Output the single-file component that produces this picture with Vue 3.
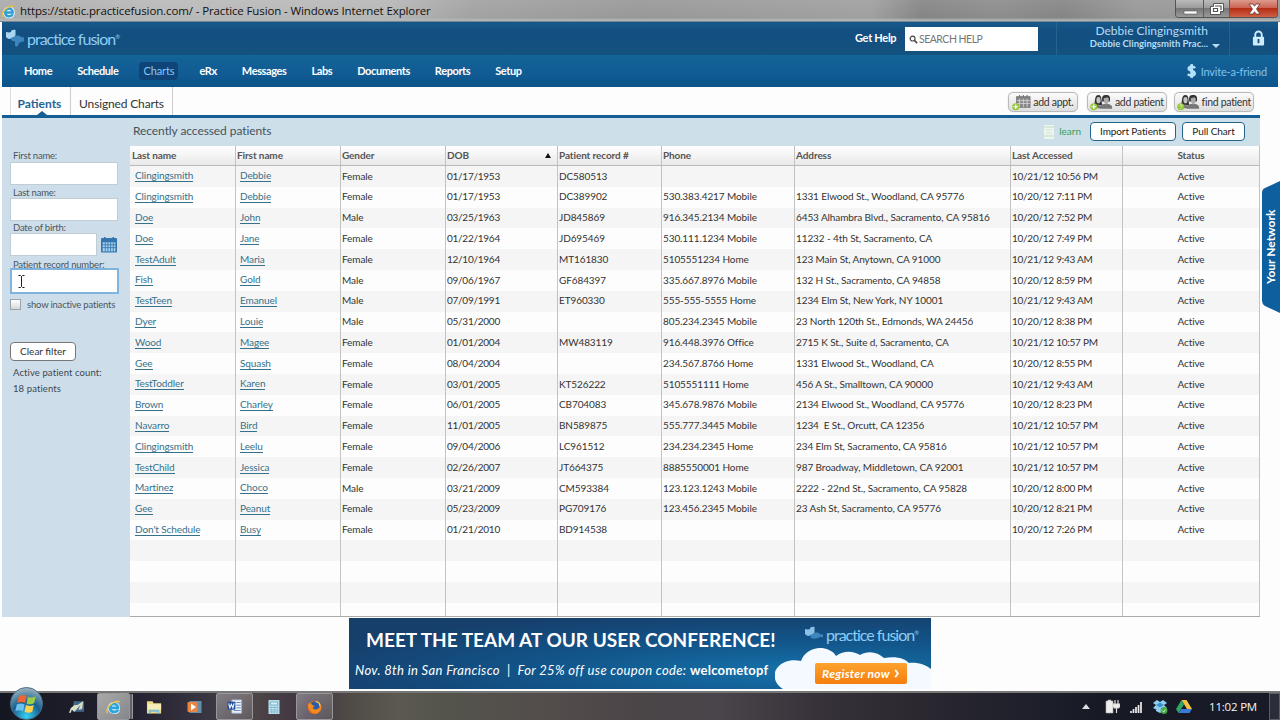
<script setup>
import { ref } from 'vue';

const navItems = ['Home', 'Schedule', 'Charts', 'eRx', 'Messages', 'Labs', 'Documents', 'Reports', 'Setup'];
const activeNav = ref('Charts');

const columns = ['Last name', 'First name', 'Gender', 'DOB', 'Patient record #', 'Phone', 'Address', 'Last Accessed', 'Status'];

const patients = [
  ['Clingingsmith', 'Debbie', 'Female', '01/17/1953', 'DC580513', '', '', '10/21/12 10:56 PM'],
  ['Clingingsmith', 'Debbie', 'Female', '01/17/1953', 'DC389902', '530.383.4217 Mobile', '1331 Elwood St., Woodland, CA 95776', '10/20/12 7:11 PM'],
  ['Doe', 'John', 'Male', '03/25/1963', 'JD845869', '916.345.2134 Mobile', '6453 Alhambra Blvd., Sacramento, CA 95816', '10/20/12 7:52 PM'],
  ['Doe', 'Jane', 'Female', '01/22/1964', 'JD695469', '530.111.1234 Mobile', '11232 - 4th St, Sacramento, CA', '10/20/12 7:49 PM'],
  ['TestAdult', 'Maria', 'Female', '12/10/1964', 'MT161830', '5105551234 Home', '123 Main St, Anytown, CA 91000', '10/21/12 9:43 AM'],
  ['Fish', 'Gold', 'Male', '09/06/1967', 'GF684397', '335.667.8976 Mobile', '132 H St., Sacramento, CA 94858', '10/20/12 8:59 PM'],
  ['TestTeen', 'Emanuel', 'Male', '07/09/1991', 'ET960330', '555-555-5555 Home', '1234 Elm St, New York, NY 10001', '10/21/12 9:43 AM'],
  ['Dyer', 'Louie', 'Male', '05/31/2000', '', '805.234.2345 Mobile', '23 North 120th St., Edmonds, WA 24456', '10/20/12 8:38 PM'],
  ['Wood', 'Magee', 'Female', '01/01/2004', 'MW483119', '916.448.3976 Office', '2715 K St., Suite d, Sacramento, CA', '10/21/12 10:57 PM'],
  ['Gee', 'Squash', 'Female', '08/04/2004', '', '234.567.8766 Home', '1331 Elwood St., Woodland, CA', '10/20/12 8:55 PM'],
  ['TestToddler', 'Karen', 'Female', '03/01/2005', 'KT526222', '5105551111 Home', '456 A St., Smalltown, CA 90000', '10/21/12 9:43 AM'],
  ['Brown', 'Charley', 'Female', '06/01/2005', 'CB704083', '345.678.9876 Mobile', '2134 Elwood St., Woodland, CA 95776', '10/20/12 8:23 PM'],
  ['Navarro', 'Bird', 'Female', '11/01/2005', 'BN589875', '555.777.3445 Mobile', '1234  E St., Orcutt, CA 12356', '10/21/12 10:57 PM'],
  ['Clingingsmith', 'Leelu', 'Female', '09/04/2006', 'LC961512', '234.234.2345 Home', '234 Elm St, Sacramento, CA 95816', '10/21/12 10:57 PM'],
  ['TestChild', 'Jessica', 'Female', '02/26/2007', 'JT664375', '8885550001 Home', '987 Broadway, Middletown, CA 92001', '10/21/12 10:57 PM'],
  ['Martinez', 'Choco', 'Male', '03/21/2009', 'CM593384', '123.123.1243 Mobile', '2222 - 22nd St., Sacramento, CA 95828', '10/20/12 8:00 PM'],
  ['Gee', 'Peanut', 'Female', '05/23/2009', 'PG709176', '123.456.2345 Mobile', '23 Ash St, Sacramento, CA 95776', '10/20/12 8:21 PM'],
  ["Don't Schedule", 'Busy', 'Female', '01/21/2010', 'BD914538', '', '', '10/20/12 7:26 PM']
];

// empty rows fill the rest of the grid
const blankRows = 4;

const firstName = ref('');
const lastName = ref('');
const birthDate = ref('');
const recordNumber = ref('');
const showInactive = ref(false);
</script>

<template>
  <div class="screen">
    <!-- Window title bar -->
    <div class="titlebar">
      <svg class="ie" viewBox="0 0 16 16">
        <path d="M4.500 9h8c0-5.500-8-5.500-8 0 0 5 6.500 5 8 2" fill="none" stroke="#e5f5fb" stroke-width="4.500" />
        <path d="M4.500 9h8c0-5.500-8-5.500-8 0 0 5 6.500 5 8 2" fill="none" stroke="#2f9fd4" stroke-width="2.600" />
        <path d="M1.500 14C-.5 9 8 .5 14.500 2.500" fill="none" stroke="#e4bd45" stroke-width="1.500" />
      </svg>
      <span class="title">https://static.practicefusion.com/ - Practice Fusion - Windows Internet Explorer</span>
      <div class="win-buttons">
        <div class="wb"><svg viewBox="0 0 28 18"><rect x="8" y="11" width="13" height="3" fill="#fff" stroke="#555" stroke-width=".6" /></svg></div>
        <div class="wb"><svg viewBox="0 0 26 18"><path d="M9.500 3.500h10v8h-3v3h-10v-8h3z" fill="#fff" stroke="#555" /><path d="M9.500 8.500h4v3h-4zM11 6h6v4" fill="none" stroke="#555" stroke-width="1.200" /></svg></div>
        <div class="wb close"><svg viewBox="0 0 47 18"><path d="M19 4h4l1.500 2.300L26 4h4l-3.500 5 3.500 5h-4l-1.500-2.300L23 14h-4l3.500-5z" fill="#fff" stroke="#6a3530" stroke-width=".8" /></svg></div>
      </div>
    </div>

    <!-- App header -->
    <header class="header">
      <div class="top">
        <div class="brand">
          <svg class="leaf" viewBox="0 0 20 20">
            <path d="M1 3l3 .5 2-.5c0-2 2-2.500 4.500-2V6l-1 3.500H6c-2 1-4 0-5-1.500z" fill="#a9d5f3" />
            <path d="M6 9c3-1 4-3 8-2.500 1 2 3 1.500 5 2v4c-3 0-3 1-5 1.500-1 5-4 4-4 2v-4c-3 1-4-1-4-3z" fill="#3c86bd" />
          </svg>
          <span>practice fusion<sup>®</sup></span>
        </div>
        <span class="help">Get Help</span>
        <div class="search">
          <svg viewBox="0 0 10 10"><circle cx="4" cy="4" r="2.700" fill="none" stroke="#444" stroke-width="1.300" /><path d="M6 6l3 3" stroke="#444" stroke-width="1.700" /></svg>
          <span>SEARCH HELP</span>
        </div>
        <div class="account">
          <div class="user">Debbie Clingingsmith</div>
          <div class="practice">Debbie Clingingsmith Prac...<i class="caret"></i></div>
        </div>
        <div class="lock">
          <svg viewBox="0 0 14 18"><path d="M3.500 8V5a3.500 3.500 0 0 1 7 0v3" fill="none" stroke="#d0ecfc" stroke-width="2" /><rect x="1" y="7" width="12" height="9.500" rx="1" fill="#d0ecfc" /><path d="M7 9.500v4.500" stroke="#134d7b" stroke-width="2" /></svg>
        </div>
      </div>
      <nav class="nav">
        <a v-for="item in navItems" :key="item" :class="{ active: item === activeNav }" @click="activeNav = item">{{ item }}</a>
        <div class="invite">
          <svg viewBox="0 0 12 15"><path d="M10 4.200C8.500 2.500 3 2.200 3 5c0 2.500 6.500 2 6.500 5 0 3-5.500 3-7.500 1" fill="none" stroke="#b5e2fc" stroke-width="2.800" /><path d="M6.200 0v15" stroke="#b5e2fc" stroke-width="3" /></svg>
          <span>Invite-a-friend</span>
        </div>
      </nav>
    </header>

    <!-- Tabs -->
    <div class="tabs">
      <div class="tab current"><span>Patients</span></div>
      <div class="tab"><span>Unsigned Charts</span></div>
      <div class="actions">
        <button class="action appt">
          <svg viewBox="0 0 20 18">
            <path d="M5 3h14v11H5zM8 1v3M12 1v3M16 1v3" fill="#888" stroke="#777" stroke-width="1.200" />
            <path d="M5 7h14M5 10h14M8 5v9M12 5v9M16 5v9" stroke="#ddd" stroke-width=".8" />
            <circle cx="4" cy="13.500" r="3.800" fill="#94c83d" /><path d="M4 11v5M1.500 13.500h5" stroke="#fff" stroke-width="1.300" />
          </svg>
          <span>add appt.</span>
        </button>
        <button class="action patient">
          <svg viewBox="0 0 24 18">
            <path d="M4 12c2-3 0-11 5-11 4 0 3 7 4 11z" fill="#333" /><ellipse cx="9" cy="6.500" rx="2.200" ry="3.300" fill="#c4c4c4" />
            <path d="M3 15c0-3 3-4 6-4l4 4zM10 15.500c0-3.500 2-4 4.500-5h5c3 1 4 1.500 4 5z" fill="#777" />
            <path d="M13 8c-1-6 1-7 4-7s5 1 4 7z" fill="#333" /><path d="M14.500 4.500l4-1 1.500 1.500c0 8-5.500 8-5.500 0z" fill="#aaa" />
            <circle cx="4" cy="13.500" r="3.800" fill="#94c83d" /><path d="M4 11v5M1.500 13.500h5" stroke="#fff" stroke-width="1.300" />
          </svg>
          <span>add patient</span>
        </button>
        <button class="action patient">
          <svg viewBox="0 0 24 18">
            <path d="M4 12c2-3 0-11 5-11 4 0 3 7 4 11z" fill="#333" /><ellipse cx="9" cy="6.500" rx="2.200" ry="3.300" fill="#c4c4c4" />
            <path d="M3 15c0-3 3-4 6-4l4 4zM10 15.500c0-3.500 2-4 4.500-5h5c3 1 4 1.500 4 5z" fill="#777" />
            <path d="M13 8c-1-6 1-7 4-7s5 1 4 7z" fill="#333" /><path d="M14.500 4.500l4-1 1.500 1.500c0 8-5.500 8-5.500 0z" fill="#aaa" />
            <circle cx="4" cy="13.500" r="3.800" fill="#94c83d" /><path d="M2.800 12c1-1.500 3-.5 2.300.6L4 13.800M4 15v1" fill="none" stroke="#e8f5d0" stroke-width="1" />
          </svg>
          <span>find patient</span>
        </button>
      </div>
    </div>

    <!-- Main area -->
    <div class="main">
      <aside class="sidebar">
        <label class="l1">First name:</label>
        <input v-model="firstName" />
        <label class="l2">Last name:</label>
        <input v-model="lastName" />
        <label class="l3">Date of birth:</label>
        <div class="date-row">
          <input v-model="birthDate" />
          <svg viewBox="0 0 15 15"><rect x="0" y="1" width="15" height="13.500" rx="1" fill="#3475ad" /><path d="M3.500 0v3M11.500 0v3" stroke="#3475ad" stroke-width="1.500" /><path d="M1.500 5h12v8.500h-12z" fill="#a9d2ee" /><path d="M1 7.300h13M1 10h13M4 5v9M6.500 5v9M9 5v9M11.500 5v9" stroke="#3475ad" stroke-width=".8" /></svg>
        </div>
        <label class="l4">Patient record number:</label>
        <div class="focused">
          <input v-model="recordNumber" />
          <svg class="ibeam" viewBox="0 0 7 13"><path d="M.5.500h2l1 1 1-1h2M3.500 1.500v10M.5 12.500h2l1-1 1 1h2" fill="none" stroke="#222" /></svg>
        </div>
        <div class="check-row" @click="showInactive = !showInactive">
          <i class="check"></i><span>show inactive patients</span>
        </div>
        <button class="clear">Clear filter</button>
        <div class="count">Active patient count:<br />18 patients</div>
      </aside>

      <section class="content">
        <div class="toolbar">
          <h2>Recently accessed patients</h2>
          <svg class="doc" viewBox="0 0 12 14"><path d="M1 0h10v14H1z" fill="#edf5ef" /><path d="M1 2h10M1 11h10" stroke="#bfdcc0" /><path d="M3 5h6M3 8h6" stroke="#d3e4da" /></svg>
          <span class="learn">learn</span>
          <button class="import">Import Patients</button>
          <button class="pull">Pull Chart</button>
        </div>
        <div class="table">
          <div class="row head">
            <div v-for="col in columns" :key="col" class="cell">
              <span>{{ col }}</span>
              <i v-if="col === 'DOB'" class="sort"></i>
            </div>
          </div>
          <div v-for="(p, i) in patients" :key="i" class="row">
            <div class="cell link"><a>{{ p[0] }}</a></div>
            <div class="cell link"><a>{{ p[1] }}</a></div>
            <div class="cell">{{ p[2] }}</div>
            <div class="cell date">{{ p[3] }}</div>
            <div class="cell">{{ p[4] }}</div>
            <div class="cell">{{ p[5] }}</div>
            <div class="cell">{{ p[6] }}</div>
            <div class="cell date">{{ p[7] }}</div>
            <div class="cell">Active</div>
          </div>
          <div v-for="n in blankRows" :key="'b' + n" class="row">
            <div v-for="c in columns" :key="c" class="cell"></div>
          </div>
        </div>
      </section>
      <div class="network"><svg viewBox="0 0 18 132"><path d="M18 0v132L3 125Q0 123 0 120V12Q0 8 3 7z" fill="#0d5f9d" /></svg><span>Your Network</span></div>
    </div>

    <!-- Conference banner -->
    <div class="banner-wrap">
      <div class="banner">
        <svg class="cloud" viewBox="0 0 156 41"><path d="M8 41C-1 36-3 25 3 19 8 13 17 11 26 13 30 2 43-3 54 2q5 2 7 6c8-6 18-5 24-1 8-5 18-3 24 3 12-2 20 0 25 5 9-1 17 2 22 6v20z" fill="#f4faff" /></svg>
        <div class="pitch">
          <div class="headline">MEET THE TEAM AT OUR USER CONFERENCE!</div>
          <div class="sub"><em>Nov. 8th in San Francisco</em><span class="bar">|</span><em>For 25% off use coupon code:</em> <b>welcometopf</b></div>
        </div>
        <div class="offer">
          <div class="brand">
            <svg class="leaf" viewBox="0 0 20 20">
              <path d="M1 4l3 .5 2-.5c0-2 2-2.500 4.500-2V7l-1 3.500H6c-2 1-4 0-5-1.500z" fill="#8bc0e5" />
              <path d="M6 10c3-1 4-3 8-2.500 1 2 3 1.500 5 2v3c-3-1-3 0-5 .5-3 1-5 1-7 0z" fill="#3c86bd" />
            </svg>
            <span>practice fusion<sup>®</sup></span>
          </div>
          <button class="register">Register now <svg viewBox="0 0 6 10"><path d="M1 1l3 4-3 4" fill="none" stroke="#fff" stroke-width="2" /></svg></button>
        </div>
      </div>
    </div>

    <!-- Windows taskbar -->
    <footer class="taskbar">
      <div class="start">
        <svg viewBox="0 0 36 36">
          <defs><radialGradient id="orb" cx=".5" cy=".9" r=".9"><stop offset="0" stop-color="#38d2f4" /><stop offset=".5" stop-color="#17608f" /><stop offset="1" stop-color="#9fb5bf" /></radialGradient></defs>
          <circle cx="18" cy="18" r="16.500" fill="url(#orb)" stroke="#4a6b80" />
          <path d="M10 11q4-3 8-.5l-1.500 7q-4-2-8 0z" fill="#ef6431" /><path d="M19.500 11q4 2 8-.5l-1.500 7q-4 2.500-8 .5z" fill="#9bcd48" />
          <path d="M8 19q4-2 8 0l-1.500 7q-4-2-8 0z" fill="#6fc2ef" /><path d="M17.500 19.500q4 2 8 0l-1.500 7q-4 2-8 0z" fill="#fbd24e" />
        </svg>
      </div>
      <div class="task t1"><svg viewBox="0 0 18 16"><path d="M6 2h11v11H5z" fill="#41688a" /><path d="M1 14l2-5 4-3h3l6-4-1 8-4 1 2-5-6 7-3-2-1 3z" fill="#d9dfc5" /></svg></div>
      <div class="task open ie-task"><svg viewBox="0 0 18 18"><path d="M5 10h9c0-6-9-6-9 0 0 5.500 7.500 5.500 9.300 2.300" fill="none" stroke="#e0f3fb" stroke-width="4.600" /><path d="M5 10h9c0-6-9-6-9 0 0 5.500 7.500 5.500 9.300 2.300" fill="none" stroke="#2ba6dc" stroke-width="3" /><path d="M2 16C0 10 8 1 16.500 3" fill="none" stroke="#f2c64b" stroke-width="1.500" /></svg></div>
      <div class="task t2"><svg viewBox="0 0 18 16"><path d="M1 2h6l1 2h8v11H1z" fill="#eed986" /><path d="M2 5h14v6H2z" fill="#f7edb9" /><path d="M3 15v-4h11v4h-2v-2H5v2z" fill="#7dbdd7" /></svg></div>
      <div class="task t3"><svg viewBox="0 0 16 16"><rect x="3" y="2" width="12" height="12" fill="#668faa" /><rect x="1" y="3" width="10" height="10" rx="1" fill="#e98542" /><path d="M4.500 4.500v7l5-3.500z" fill="#fff" /></svg></div>
      <div class="task open word"><svg viewBox="0 0 18 18"><path d="M6 1h11v15H6z" fill="#f2f6fd" stroke="#9baacc" /><path d="M11 4h5M11 7h5M11 10h5M8 13h8" stroke="#5577b1" /><path d="M1 3h9v9H1z" fill="#27509b" /><path d="M2.500 5l1.300 5 1.700-4 1.700 4 1.300-5" fill="none" stroke="#fff" stroke-width="1.200" /></svg></div>
      <div class="task t4"><svg viewBox="0 0 14 16"><rect x="1" y="1" width="11" height="14" fill="#b5dcea" /><path d="M3 3h7v3H3z" fill="#d9f0f8" stroke="#6fa5bd" stroke-width=".8" /><path d="M3 8.500h2M6 8.500h2M9 8.500h1.500M3 11h2M6 11h2M9 11h1.500M3 13h2M6 13h2M9 13h1.500" stroke="#6fa5bd" /></svg></div>
      <div class="task open fox"><svg viewBox="0 0 18 18"><circle cx="9" cy="9.500" r="7.500" fill="#e16b17" /><circle cx="9.500" cy="7.500" r="5" fill="#2a5ca8" /><path d="M2 5q3-1 5 2l2 1-2 2q2 3 6 1 3-1 2-6 4 6-1 10T4 13Q1 10 2 5z" fill="#f28b22" /><path d="M10 3q5 0 5 5" stroke="#f4c644" stroke-width="1.500" fill="none" /></svg></div>
      <div class="tray">
        <i class="up"></i>
        <svg class="battery" viewBox="0 0 15 15"><path d="M3 1h3v1h2v12H1V2h2z" fill="#eee" stroke="#aaa" stroke-width=".6" /><path d="M10 1v4M13 1v4M8.500 5h6v2q0 2-2 2h-2q-2 0-2-2zM11.500 8v6" fill="#eee" stroke="#ddd" stroke-width="1.200" /></svg>
        <svg class="signal" viewBox="0 0 12 12"><path d="M1 12v-2M3.500 12V8M6 12V6M8.500 12V4M11 12V1" stroke="#eee" stroke-width="1.700" /></svg>
        <svg class="dropbox" viewBox="0 0 16 16"><path d="M5 1L1 4l3 2-3 3 4 2 3-2 3 2 4-2-3-3 3-2-4-3-3 2zM4 11v1l4 2 4-2v-1l-4-2z" fill="#8ed0f4" /><path d="M4 6l4-2.500L12 6 8 8.500z" fill="#3d8fc8" /><circle cx="12" cy="11.500" r="3.400" fill="#49a942" /><path d="M10.300 11.500l1.400 1.400 2-2.500" fill="none" stroke="#d8f2d2" /></svg>
        <svg class="drive" viewBox="0 0 16 15"><path d="M5.500 1h5L16 10h-5z" fill="#f5c33b" /><path d="M5.500 1L0 10l2.500 4L8 5.500z" fill="#31a566" /><path d="M2.500 14h11L16 10H5.300z" fill="#3a78dc" /></svg>
        <span class="clock">11:02 PM</span>
        <i class="desk"></i>
      </div>
    </footer>
  </div>
</template>

<style>
body {
  margin: 0;
  overflow: hidden;
}
</style>

<style scoped>
.screen {
  width: 1280px;
  height: 720px;
  display: flex;
  flex-direction: column;
  font-family: Lato, 'Liberation Sans', sans-serif;
  font-size: 10px;
  color: #333;
  background: #fdfdfd;
  overflow: hidden;
  box-sizing: border-box;
}

.screen * {
  box-sizing: border-box;
}

svg {
  display: block;
  flex: none;
}

button {
  font-family: inherit;
  padding: 0;
  white-space: nowrap;
}

/* title bar */
.titlebar {
  height: 22px;
  flex: none;
  display: flex;
  align-items: center;
  padding-left: 1px;
  background: linear-gradient(rgba(255, 255, 255, 0.08), rgba(255, 255, 255, 0) 80%, #b5b8ba 94%, #4f6778),
    linear-gradient(90deg, #aaa 0, #bababa 13%, #b8b8b8 30%, #a2a2a2 37%, #989898 50%, #a0a0a0 68%, #858585 72%, #8d8d8d 78%, #858585 83%, #989898 89%, #999);
}

.ie {
  width: 15px;
  height: 15px;
}

.title {
  margin-left: 4px;
  margin-bottom: 1px;
  font-family: 'Open Sans', 'Noto Sans', sans-serif;
  font-size: 11.5px;
  letter-spacing: -0.12px;
  color: #111;
  white-space: nowrap;
}

.win-buttons {
  margin-left: auto;
  margin-right: 2px;
  align-self: flex-start;
  display: flex;
  height: 18px;
  border: 1px solid #555;
  border-top: 0;
  border-radius: 0 0 4px 4px;
  overflow: hidden;
}

.wb {
  width: 28px;
  border-right: 1px solid #5c5c5c;
  background: linear-gradient(#bbb, #9c9c9c 45%, #777 50%, #999);
}

.wb:nth-child(2) {
  width: 26px;
}

.wb.close {
  width: 47px;
  border: 0;
  background: linear-gradient(#dc9a8c, #cb6553 45%, #b52d16 50%, #cf6046);
}

.wb svg {
  height: 18px;
}

/* header */
.header {
  height: 65px;
  flex: none;
  margin: 0 2px;
  color: #fff;
}

.top {
  height: 33px;
  display: flex;
  align-items: center;
  background: linear-gradient(#17588a, #134f80 30%, #13517f);
}

.brand {
  display: flex;
  align-items: center;
  color: #8ecdf5;
  font-size: 16px;
  letter-spacing: -1px;
  white-space: nowrap;
}

.top .brand {
  width: 850px;
  padding-left: 3px;
}

.leaf {
  width: 20px;
  height: 20px;
  margin-right: 2px;
}

.brand sup {
  font-size: 6px;
  vertical-align: 6px;
  line-height: 0;
}

.help {
  width: 53px;
  padding: 0 0 2px 3px;
  font-size: 11px;
  font-weight: bold;
  letter-spacing: -0.3px;
  white-space: nowrap;
}

.search {
  width: 133px;
  height: 24px;
  margin-top: 1px;
  background: #fff;
  color: #777;
  display: flex;
  align-items: center;
  gap: 1px;
  padding-left: 4px;
  font-size: 10.5px;
  letter-spacing: -0.5px;
}

.search svg {
  width: 9px;
  height: 9px;
}

.account {
  width: 174px;
  height: 33px;
  margin-left: 18px;
  border-left: 1px solid #27638f;
  border-right: 1px solid #27638f;
  color: #b5dcf5;
  padding-right: 9px;
  text-align: right;
  white-space: nowrap;
}

.user {
  font-size: 12px;
  line-height: 15px;
  padding: 1px 12px 0 0;
}

.practice {
  display: flex;
  justify-content: flex-end;
  align-items: center;
  font-size: 9.5px;
  line-height: 12px;
  font-weight: bold;
}

.caret {
  border: 4px solid transparent;
  border-top-color: #b5dcf5;
  border-bottom: 0;
  margin: 3px 0 0 4px;
}

.lock {
  flex: 1;
  display: flex;
  justify-content: center;
  padding-left: 8px;
}

.lock svg {
  width: 13px;
  height: 17px;
}

.nav {
  height: 32px;
  display: flex;
  align-items: center;
  padding-left: 18px;
  gap: 17px;
  background: linear-gradient(#136498, #115b93 60%, #0c5489);
  font-size: 11px;
  font-weight: bold;
}

.nav a {
  padding: 0 4px;
  height: 18px;
  line-height: 18px;
  border-radius: 4px;
  letter-spacing: -0.4px;
}

.nav a.active {
  background: #0e4477;
  color: #8ac7f3;
  font-weight: normal;
  letter-spacing: -0.1px;
}

.invite {
  margin-left: auto;
  margin-right: 11px;
  display: flex;
  align-items: center;
  gap: 4px;
  color: #7fc3ef;
  font-weight: normal;
  font-size: 11px;
  letter-spacing: -0.2px;
}

.invite svg {
  width: 11px;
  height: 14px;
}

/* tabs */
.tabs {
  height: 31px;
  flex: none;
  width: 1258px;
  margin-left: 2px;
  padding-left: 8px;
  display: flex;
  border-bottom: 3px solid #145e94;
}

.tab {
  width: 102px;
  border-right: 1px solid #ccc;
  font-size: 12px;
  display: flex;
  align-items: center;
  justify-content: center;
  padding-top: 4px;
  color: #333;
  letter-spacing: -0.15px;
  white-space: nowrap;
}

.tab.current {
  width: 61px;
  border-left: 1px solid #ddd;
  padding-right: 2px;
  color: #1d6395;
  font-weight: bold;
  letter-spacing: 0;
  position: relative;
}

.tab.current::after {
  content: '';
  position: absolute;
  left: 26px;
  bottom: 0;
  border: 5px solid transparent;
  border-top: 0;
  border-bottom: 4px solid #145e94;
}

.actions {
  margin-left: auto;
  margin-right: 6px;
  padding-top: 5px;
  display: flex;
  gap: 7px;
}

.action {
  height: 20px;
  width: 80px;
  display: flex;
  align-items: center;
  justify-content: center;
  gap: 2px;
  border: 1px solid #b9b9b9;
  border-radius: 5px;
  background: linear-gradient(#fbfbfb, #dedede);
  box-shadow: 0 0 1px #bbb;
  font-size: 10.5px;
  letter-spacing: -0.3px;
  color: #333;
}

.action.appt {
  width: 70px;
  margin-right: 2px;
}

.action svg {
  height: 17px;
}

/* main */
.main {
  height: 499px;
  flex: none;
  margin-left: 2px;
  display: flex;
  position: relative;
}

.sidebar {
  width: 128px;
  background: #cddeea;
  padding: 31px 12px 0 8px;
  display: flex;
  flex-direction: column;
  align-items: flex-start;
  font-size: 9.5px;
  letter-spacing: -0.2px;
  color: #4c565f;
  white-space: nowrap;
}

.sidebar label {
  line-height: 13px;
  height: 12px;
  margin-left: 3px;
}

.sidebar input {
  width: 108px;
  height: 23px;
  background: #fff;
  border: 1px solid #bfcdd5;
  padding: 0 4px;
  outline: none;
}

.l1 {
  margin-bottom: 1px;
}

.l2 {
  margin-top: 1px;
}

.sidebar .date-row {
  display: flex;
  align-items: center;
  gap: 4px;
}

.date-row input {
  width: 87px;
}

.date-row svg {
  width: 16px;
  height: 16px;
}

.l4 {
  margin-top: 2px;
}

.focused {
  position: relative;
  margin-top: -2px;
}

.focused input {
  display: block;
  height: 26px;
  width: 109px;
  border: 2px solid #7eb4de;
}

.ibeam {
  position: absolute;
  left: 8px;
  top: 7px;
  width: 7px;
  height: 13px;
}

.check-row {
  display: flex;
  align-items: center;
  gap: 6px;
  margin-top: 5px;
}

.check {
  width: 11px;
  height: 11px;
  border: 1px solid #9ba3a8;
  background: linear-gradient(#fff, #d4d8da);
}

.clear {
  margin-top: 32px;
  width: 66px;
  height: 19px;
  border: 1px solid #777;
  border-radius: 4px;
  background: #fff;
  padding-bottom: 1px;
  font-size: 10px;
  color: #333;
}

.count {
  margin: 4px 0 0 3px;
  line-height: 15.5px;
  letter-spacing: 0.1px;
  color: #3d474f;
}

.content {
  width: 1130px;
}

.toolbar {
  height: 28px;
  background: #cddfe9;
  display: flex;
  align-items: center;
  padding: 0 15px 1px 0;
}

.toolbar h2 {
  margin: 0 auto 2px 3px;
  font-size: 12px;
  letter-spacing: -0.08px;
  font-weight: normal;
  color: #45535e;
}

.doc {
  width: 12px;
  height: 14px;
}

.learn {
  margin: 0 9px 2px 4px;
  color: #38a05b;
  font-size: 10px;
}

.toolbar button {
  height: 19px;
  border: 1px solid #24658c;
  border-radius: 4px;
  background: #fff;
  padding-bottom: 1px;
  color: #222;
  font-size: 10px;
  letter-spacing: -0.1px;
}

.import {
  width: 86px;
  margin-right: 6px;
}

.pull {
  width: 63px;
}

.table {
  height: 471px;
  overflow: hidden;
  border-bottom: 1px solid #aaa;
}

.row {
  height: 20.8px;
  display: grid;
  grid-template-columns: 106px 105px 105px 112px 104px 133px 216px 112px 137px;
  background: #fdfdfd;
}

.row:nth-child(even) {
  background: #f5f5f5;
}

.row.head {
  height: 20px;
  background: linear-gradient(#fff, #e9e9e9);
  border-bottom: 1px solid #bbb;
  font-weight: bold;
  color: #555;
}

.cell {
  border-right: 1px solid #c3c3c3;
  padding: 0 0 1.5px 1px;
  display: flex;
  align-items: center;
  white-space: pre;
  letter-spacing: -0.1px;
}

.cell.date {
  letter-spacing: -0.25px;
}

.cell:first-child {
  padding-left: 2px;
}

.cell:last-child {
  justify-content: center;
  padding-right: 1px;
}

.cell.link {
  padding: 0 0 0 5px;
}

.cell.link + .cell.link {
  padding-left: 4px;
}

.cell a {
  color: #35718a;
  border-bottom: 1px solid #35718a;
  line-height: 11px;
}

.sort {
  border: 3px solid transparent;
  border-top: 0;
  border-bottom: 5px solid #111;
  margin: 2px 6px 0 auto;
}

.network {
  position: absolute;
  right: 0;
  top: 63px;
  width: 18px;
  height: 132px;
}

.network svg {
  width: 18px;
  height: 132px;
}

.network span {
  position: absolute;
  inset: 0;
  writing-mode: vertical-rl;
  transform: rotate(180deg);
  text-align: center;
  line-height: 17px;
  font-size: 12px;
  font-weight: bold;
  color: #fff;
}

/* banner */
.banner-wrap {
  height: 74px;
  flex: none;
  padding: 1px 0 0 349px;
}

.banner {
  width: 582px;
  height: 71px;
  position: relative;
  display: flex;
  background: radial-gradient(ellipse at 78% 75%, #1573ab, #12558a 40%, #163f6c 80%);
  color: #fff;
  overflow: hidden;
}

.cloud {
  position: absolute;
  right: 0;
  bottom: 0;
  width: 156px;
  height: 41px;
}

.pitch {
  width: 455px;
  white-space: nowrap;
}

.headline {
  margin: 10px 0 0 17px;
  font-size: 19px;
  line-height: 24px;
  font-weight: bold;
}

.sub {
  margin: 10px 0 0 6px;
  font-size: 13px;
  line-height: 16px;
  letter-spacing: 0.35px;
}

.sub b {
  letter-spacing: 0.2px;
}

.bar {
  margin: 0 7px;
}

.offer {
  position: relative;
}

.offer .brand {
  padding-top: 5px;
  height: 28px;
}

.register {
  width: 92px;
  height: 21px;
  margin: 17px 0 0 11px;
  border: 0;
  border-radius: 2px;
  background: linear-gradient(#fca32e, #f67e0d);
  color: #fff;
  font-size: 12px;
  font-weight: bold;
  font-style: italic;
  letter-spacing: 0.25px;
  display: flex;
  align-items: center;
  justify-content: center;
  gap: 4px;
}

.register svg {
  width: 6px;
  height: 9px;
}

/* taskbar */
.taskbar {
  height: 29px;
  flex: none;
  border-top: 2px solid #777;
  display: flex;
  padding-left: 9px;
  background: linear-gradient(90deg, #141722 0, #252331 11%, #393441 16%, #4d4446 20%, #3d3443 24%, #4e4945 27%, #5c5950 31%, #54544b 35%, #534d4b 42%, #4b4548 50%, #49454a 56%, #37323a 64%, #2c2931 71%, #20212b 79%, #171a25 86%, #181b27);
}

.start {
  width: 35px;
  height: 35px;
  margin-top: -7px;
}

.start svg {
  width: 35px;
  height: 35px;
}

.task {
  height: 27px;
  display: flex;
  align-items: center;
  justify-content: center;
}

.task svg {
  width: 17px;
  height: 16px;
}

.t1 {
  width: 34px;
  margin-left: 15px;
}

.t2 {
  width: 30px;
  margin-left: 9px;
}

.t3 {
  width: 30px;
  margin-left: 10px;
}

.t4 {
  width: 30px;
  margin-left: 6px;
}

.open {
  width: 37px;
  border: 1px solid #97979a;
  border-radius: 2px;
  background: linear-gradient(135deg, rgba(255, 255, 255, 0.35), rgba(255, 255, 255, 0.12));
}

.ie-task {
  width: 33px;
  margin-left: 4px;
  box-shadow: 3px 0 0 -1px #606069, 4px 0 0 -1px #9b9b9e;
  background: linear-gradient(135deg, #aaa, #85868a);
}

.word {
  margin-left: 7px;
}

.fox {
  margin-left: 7px;
}

.tray {
  margin-left: auto;
  display: flex;
  align-items: center;
}

.up {
  border: 4px solid transparent;
  border-top: 0;
  border-bottom: 5px solid #ddd;
  margin-right: 15px;
}

.battery {
  width: 15px;
  height: 15px;
  margin-right: 10px;
}

.signal {
  width: 12px;
  height: 12px;
  margin-right: 10px;
}

.dropbox {
  width: 16px;
  height: 16px;
  margin-right: 8px;
}

.drive {
  width: 16px;
  height: 15px;
  margin-right: 17px;
}

.clock {
  font-family: 'Open Sans', 'Noto Sans', sans-serif;
  font-size: 11.5px;
  color: #f5f5f5;
  margin-right: 12px;
  letter-spacing: -0.2px;
  white-space: nowrap;
}

.desk {
  width: 11px;
  height: 27px;
  border: 1px solid #5b5d65;
  background: #2b2e38;
}
</style>
